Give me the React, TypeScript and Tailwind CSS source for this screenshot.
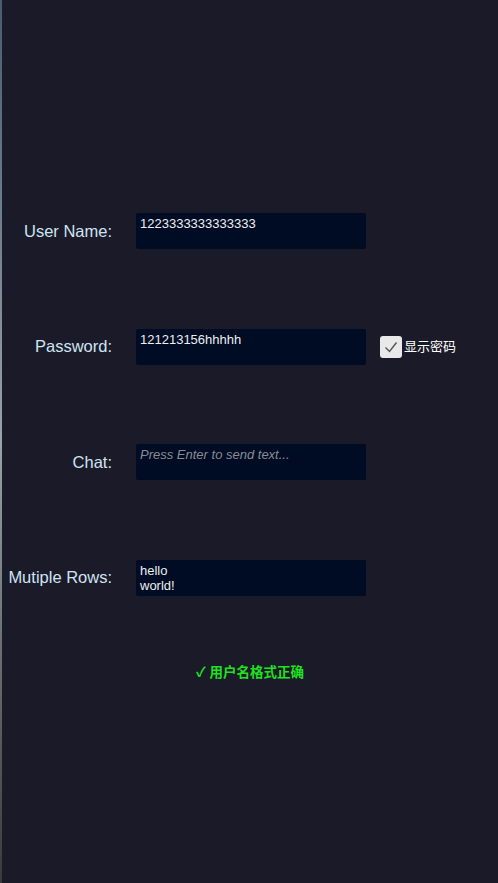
const fontStack = "font-['Liberation_Sans','Noto_Sans_CJK_SC',sans-serif]";

const Row = ({ label, children, extra }: { label: string; children: React.ReactNode; extra?: React.ReactNode }) => (
  <div className="flex items-center">
    <div className="w-[110px] shrink-0 text-right text-[16.5px] text-[#cfe4f4]">{label}</div>
    <div className="ml-[24px] h-[36px] w-[230px] shrink-0 rounded-[2px] bg-[#000b24] px-[4px] pt-[3px] text-[13px] leading-[15px] text-[#eeeeee]">
      {children}
    </div>
    {extra}
  </div>
);

const App = () => {
  return (
    <div className={`flex h-[883px] w-[498px] overflow-hidden bg-[#1b1a28] ${fontStack}`}>
      {/* left edge line */}
      <div className="h-full w-[2px] shrink-0 bg-gradient-to-b from-[#4a5a72] via-[#98a4a8] to-[#3a3a3a]" />

      <div className="flex flex-1 flex-col pt-[213px]">
        <div className="flex flex-col gap-[79.5px]">
          <Row label="User Name:">1223333333333333</Row>
          <Row
            label="Password:"
            extra={
              <label className="ml-[14px] flex items-center gap-[2px]">
                <span className="flex h-[22px] w-[22px] items-center justify-center rounded-[3px] bg-[#e9e9e9]">
                  <svg width="16" height="16" viewBox="0 0 16 16" fill="none">
                    <path d="M2.5 8.5 L6.5 12.5 L13.5 3.5" stroke="#555" strokeWidth="1.4" />
                  </svg>
                </span>
                <span className="text-[13px] text-white">显示密码</span>
              </label>
            }
          >
            121213156hhhhh
          </Row>
          <Row label="Chat:">
            <span className="italic text-[#8b8b92]">Press Enter to send text...</span>
          </Row>
          <Row label="Mutiple Rows:">
            hello
            <br />
            world!
          </Row>
        </div>

        <div className="mt-[67px] text-center text-[13.5px] font-semibold text-[#1fe21f]">✓ 用户名格式正确</div>
      </div>
    </div>
  );
};

export default App;
